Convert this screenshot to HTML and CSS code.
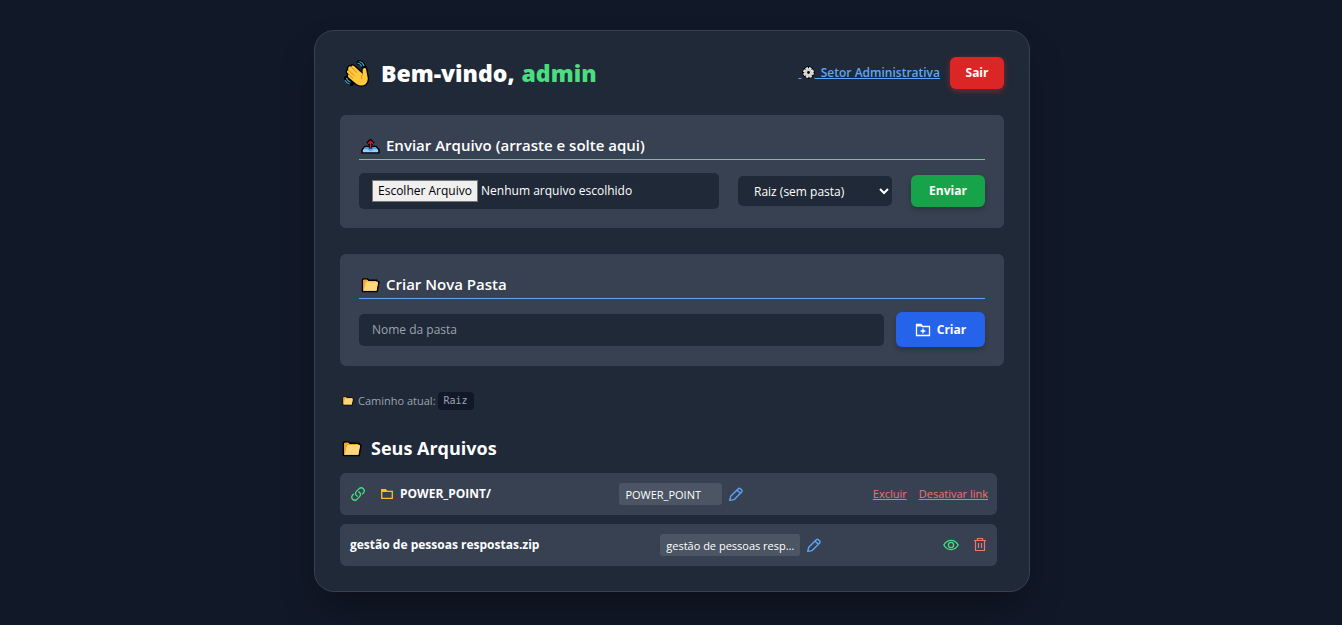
FILE: index.html
```
<!DOCTYPE html>
<html lang="pt-BR">
<head>
	<meta charset="UTF-8">
	<meta name="viewport" content="width=device-width, initial-scale=1.0">
	<title>Seus Arquivos</title>
	<link rel="stylesheet" href="styles.css">
</head>
<body>
	<svg class="sprite" aria-hidden="true">
		<symbol id="folder" viewBox="0 0 20 16">
			<path d="M1.5 14.5V2.2Q1.5 1 2.7 1H6.5L8 2.3H17V4H19L17 14.5Z" fill="#ffd679" stroke="#000" stroke-width="1.6" stroke-linejoin="round"/>
			<path d="M2.2 14V2.5Q2.2 1.8 3 1.8H6.2L7.6 3.1H16.2V4H5.2L3 14Z" fill="#f5a623"/>
			<path d="M5.2 4H18L16.4 13.7H3Z" fill="#ffd679"/>
		</symbol>
		<symbol id="pencil" viewBox="0 0 24 24">
			<path d="M2.5 21.500L4 15.500L15.500 4Q17 2.500 18.500 4L20.500 6Q22 7.500 20.500 9L9 20.500ZM13.500 6L18.500 11" fill="none" stroke="currentColor" stroke-width="2" stroke-linejoin="round"/>
		</symbol>
	</svg>

	<div class="card">
		<div class="header">
			<h1>
				<svg class="wave" viewBox="0 0 28 28" aria-hidden="true">
					<path d="M17 3.500Q20.500 4 22 8M4.500 19.500Q5.500 23 9.500 24.500" fill="none" stroke="#000" stroke-width="5" stroke-linecap="round"/>
					<path d="M6.500 8.500Q7.500 6.500 9.300 8Q9.600 5.500 12 7L16.500 11.200L20.800 15L20.600 10.500Q21.500 8 24 9.500L25 15.500Q27 22 23.500 25.200Q19.500 28 14.500 25L6.700 18.500Q5 16.500 6.800 15.500L5.200 13.600Q4.300 11.600 6.500 11.200Q5.500 10 6.500 8.500Z" fill="#ffc83d" stroke="#000" stroke-width="2.600" stroke-linejoin="round"/>
					<path d="M6.500 8.500Q7.500 6.500 9.300 8Q9.600 5.500 12 7L16.500 11.200L20.800 15L20.600 10.500Q21.500 8 24 9.500L25 15.500Q27 22 23.500 25.200Q19.500 28 14.500 25L6.700 18.500Q5 16.500 6.800 15.500L5.200 13.600Q4.300 11.600 6.500 11.200Q5.500 10 6.500 8.500Z" fill="#ffc83d"/>
					<path d="M9.300 8L15 13.700M6.500 11.200L12.500 16.800M6.800 15.500L10.800 19M20.800 15Q18.500 17 19.800 19.800" fill="none" stroke="#d68a1c" stroke-width="1"/>
					<path d="M15.500 4Q18.500 4.500 19.700 7.500M17.500 2.500Q21 3.500 22 7M4.300 19Q5.500 22 8.500 23.200M3 21.200Q4.500 24.200 7.800 25.200" fill="none" stroke="#2ba7c9" stroke-width="1.200"/>
				</svg>
				<span>Bem-vindo,</span> <span class="user">admin</span>
			</h1>
			<div class="nav">
				<a href="#" class="admin-link">&nbsp;<svg class="gear" viewBox="0 0 16 16" aria-hidden="true"><circle cx="8" cy="8" r="7.600"/><circle cx="8" cy="8" r="5.200" fill="#e6e6e6"/><circle cx="8" cy="8" r="5.400" fill="none" stroke="#e6e6e6" stroke-width="2.600" stroke-dasharray="2.940 1.300"/><circle cx="8" cy="8" r="3.600" fill="none" stroke="#b5b5b5" stroke-width="1"/><circle cx="8" cy="8" r="1.700"/></svg>&nbsp; Setor Administrativa</a>
				<button type="button" class="btn btn-red">Sair</button>
			</div>
		</div>

		<form class="panel">
			<h3 class="line-green">
				<svg class="icon-title" viewBox="0 0 20 16" aria-hidden="true">
					<path d="M4 8H16L19 11.500V14.800H1V11.500Z" fill="#9bd0f5" stroke="#000" stroke-width="1.500" stroke-linejoin="round"/>
					<path d="M4.500 8.500H15.500L17.500 11H13Q12.500 12.700 10 12.700T7 11H2.500Z" fill="#4aa3e8"/>
					<path d="M10 10V3M6.800 5L10 2L13.200 5" fill="none" stroke="#000" stroke-width="3.600"/>
					<path d="M10 10V3M7.300 5L10 2.300L12.700 5" fill="none" stroke="#d3132b" stroke-width="1.500"/>
				</svg>
				Enviar Arquivo (arraste e solte aqui)
			</h3>
			<div class="send-row">
				<div class="file-box">
					<input type="file" id="arquivo" class="file-input">
					<label for="arquivo"><span class="file-btn">Escolher Arquivo</span> Nenhum arquivo escolhido</label>
				</div>
				<select aria-label="Pasta">
					<option>Raiz (sem pasta)</option>
				</select>
				<button type="button" class="btn btn-green">Enviar</button>
			</div>
		</form>

		<form class="panel">
			<h3 class="line-blue">
				<svg class="icon-title" aria-hidden="true"><use href="#folder"/></svg>
				Criar Nova Pasta
			</h3>
			<div class="create-row">
				<input type="text" class="folder-name" placeholder="Nome da pasta" aria-label="Nome da pasta">
				<button type="button" class="btn btn-blue">
					<svg class="icon-new" viewBox="0 0 16 14" aria-hidden="true">
						<path d="M1.500 12.500V1.500H6L7.500 3.500H14.500V12.500Z" fill="none" stroke="currentColor" stroke-width="1.300"/>
						<path d="M1.500 1.500H6L7.500 3.500H1.500Z" fill="currentColor"/>
						<path d="M8 5.600V10.400M5.600 8H10.400" stroke="currentColor" stroke-width="1.300"/>
					</svg>
					Criar
				</button>
			</div>
		</form>

		<div class="path">
			<svg class="icon-path" aria-hidden="true"><use href="#folder"/></svg>
			Caminho atual: <code>Raiz</code>
		</div>

		<h2>
			<svg class="icon-list" aria-hidden="true"><use href="#folder"/></svg>
			Seus Arquivos
		</h2>
		<ul class="files">
			<li>
				<div class="name">
					<svg class="icon-link" viewBox="0 0 24 24" aria-hidden="true">
						<path d="M13.200 8.700a4.500 4.500 0 0 1 1.200 7.200l-4.500 4.500a4.500 4.500 0 0 1-6.300-6.300l1.700-1.800M18.700 11.700l1.700-1.800a4.500 4.500 0 0 0-6.300-6.300L9.600 8.100a4.500 4.500 0 0 0 1.200 7.200" fill="none" stroke="currentColor" stroke-width="2" stroke-linecap="round"/>
					</svg>
					<svg class="icon-folder" viewBox="0 0 12 11" aria-hidden="true">
						<path d="M.7 9.300V.7H4.500L6 2.300H11.300V9.300Z" fill="none" stroke="currentColor" stroke-width="1.300"/>
						<path d="M.7.700H4.500L6 3H.7Z" fill="currentColor"/>
					</svg>
					<span>POWER_POINT/</span>
				</div>
				<div class="rename">
					<input type="text" class="short" value="POWER_POINT" aria-label="Novo nome da pasta">
					<button type="button" class="icon-btn blue" aria-label="Renomear"><svg viewBox="0 0 24 24"><use href="#pencil"/></svg></button>
				</div>
				<div class="links">
					<a href="#">Excluir</a>
					<a href="#">Desativar link</a>
				</div>
			</li>
			<li>
				<div class="name"><span>gestão de pessoas respostas.zip</span></div>
				<div class="rename">
					<input type="text" class="long" value="gestão de pessoas respostas" aria-label="Novo nome do arquivo">
					<button type="button" class="icon-btn blue" aria-label="Renomear"><svg viewBox="0 0 24 24"><use href="#pencil"/></svg></button>
				</div>
				<div class="actions">
					<button type="button" class="icon-btn green" aria-label="Ver">
						<svg viewBox="0 0 16 16"><path d="M.8 8Q3.500 3.400 8 3.400T15.200 8Q12.500 12.600 8 12.600T.8 8Z" fill="none" stroke="currentColor" stroke-width="1.300"/><circle cx="8" cy="8" r="2.600" fill="none" stroke="currentColor" stroke-width="1.300"/></svg>
					</button>
					<button type="button" class="icon-btn red" aria-label="Excluir">
						<svg viewBox="0 0 16 16"><path d="M2 3.500H14M5.500 3.500V1.500H10.500V3.500M3.500 3.500V13.500H12.500V3.500M6.500 6V11M9.500 6V11" fill="none" stroke="currentColor" stroke-width="1.200"/></svg>
					</button>
				</div>
			</li>
		</ul>
	</div>
</body>
</html>
```
FILE: styles.css
```
*{
	margin: 0;
	padding: 0;
	box-sizing: border-box;
}
body{
	min-height: 100vh;
	padding: 30px 16px 30px 18px;
	background-color: #111827;
	color: #fff;
	font-family: "Open Sans", "Noto Sans", sans-serif;
	font-size: 12px;
	line-height: 18px;
}
button, input, select{
	font: inherit;
	color: inherit;
	border: none;
}
button{
	cursor: pointer;
}
svg{
	flex: none;
}
.sprite{
	display: none;
}
.card{
	max-width: 716px;
	margin: 0 auto;
	padding: 25px;
	background-color: #1f2937;
	border: 1px solid #374151;
	border-radius: 20px;
	box-shadow: 0 20px 40px -10px rgba(0,0,0,0.4);
}

/* header */
.header{
	display: flex;
	justify-content: space-between;
	align-items: center;
	margin-bottom: 25px;
}
h1{
	display: flex;
	align-items: center;
	gap: 7px;
	font-size: 23px;
	font-weight: 800;
	line-height: 34px;
}
.wave{
	width: 28px;
	height: 28px;
	margin: 0 4px 0 2px;
}
.user{
	color: #4ade80;
}
.nav{
	display: flex;
	align-items: center;
	gap: 10px;
}
.admin-link{
	color: #60a5fa;
	font-weight: 600;
}
.gear{
	width: 13px;
	height: 13px;
	vertical-align: -2px;
}
.btn{
	display: flex;
	align-items: center;
	justify-content: center;
	height: 32px;
	border-radius: 6px;
	font-weight: 700;
	box-shadow: 0 3px 5px rgba(0,0,0,0.2);
}
.btn-red{
	width: 54px;
	background-color: #dc2626;
	box-shadow: 0 2px 6px rgba(220,38,38,0.5);
}
.btn-green{
	width: 74px;
	background-color: #16a34a;
}
.btn-blue{
	width: 89px;
	height: 35px;
	gap: 6px;
	background-color: #2563eb;
}

/* panels */
.panel{
	margin-bottom: 26px;
	padding: 19px;
	background-color: #374151;
	border-radius: 6px;
}
h3{
	display: flex;
	align-items: center;
	gap: 6px;
	padding-bottom: 3px;
	margin-bottom: 13px;
	font-size: 15px;
	font-weight: 600;
	line-height: 22px;
	border-bottom: 1px solid;
}
.line-green{
	border-color: #4ade80;
}
.line-blue{
	border-color: #60a5fa;
}
.icon-title{
	width: 19px;
	height: 15px;
	margin: 2px 0 0 2px;
}
.send-row{
	display: flex;
	align-items: center;
	gap: 19px;
}
.file-box{
	position: relative;
	flex: 1;
	height: 36px;
	padding: 7px 13px;
	background-color: #1f2937;
	border-radius: 5px;
}
.file-input{
	position: absolute;
	width: 1px;
	height: 1px;
	opacity: 0;
}
.file-btn{
	display: inline-block;
	padding: 1px 5px;
	line-height: 18px;
	color: #000;
	background-color: #efefef;
	border: 1px solid #767676;
}
select{
	width: 154px;
	height: 30px;
	padding: 0 12px;
	background-color: #1f2937;
	border-radius: 5px;
}
.create-row{
	display: flex;
	align-items: center;
	gap: 12px;
}
.folder-name{
	flex: 1;
	height: 32px;
	padding: 0 13px;
	background-color: #1f2937;
	border-radius: 5px;
}
.folder-name::placeholder{
	color: #9ca3af;
}
.icon-new{
	width: 16px;
	height: 14px;
}

/* path */
.path{
	display: flex;
	align-items: center;
	gap: 2px;
	margin-bottom: 25px;
	color: #9ca3af;
	font-size: 11px;
}
.path code{
	padding: 0 6px;
	font-family: "DejaVu Sans Mono", monospace;
	font-size: 10px;
	color: #9ca3af;
	background-color: #111827;
	border-radius: 4px;
}
.icon-path{
	width: 12px;
	height: 10px;
	margin: 0 2px;
}
h2{
	display: flex;
	align-items: center;
	gap: 9px;
	margin-bottom: 12px;
	font-size: 18px;
	font-weight: 700;
	line-height: 26px;
}
.icon-list{
	width: 20px;
	height: 16px;
	margin: 1px 0 0 2px;
}

/* file list */
.files{
	display: flex;
	flex-direction: column;
	gap: 9px;
	padding-right: 7px;
	list-style: none;
}
.files li{
	display: flex;
	justify-content: space-between;
	align-items: center;
	height: 42px;
	padding: 0 9px 0 10px;
	background-color: #374151;
	border-radius: 6px;
}
.name, .rename, .links, .actions{
	display: flex;
	align-items: center;
}
.name{
	font-weight: 700;
}
.icon-link{
	width: 16px;
	height: 16px;
	margin-right: 15px;
	color: #4ade80;
}
.icon-folder{
	width: 12px;
	height: 11px;
	margin-right: 7px;
	color: #fbbf24;
}
.rename{
	gap: 6px;
}
.rename input{
	height: 22px;
	padding: 0 2px 0 6px;
	font-size: 11px;
	background-color: #4b5563;
	border-radius: 3px;
	text-overflow: ellipsis;
}
.rename .short{
	width: 103px;
}
.rename .long{
	width: 140px;
}
.icon-btn{
	display: flex;
	background: none;
}
.icon-btn svg{
	width: 16px;
	height: 16px;
}
.blue{
	color: #60a5fa;
}
.green{
	color: #4ade80;
}
.red, .links a{
	color: #f87171;
}
.links{
	gap: 12px;
	font-size: 11px;
}
.actions{
	gap: 13px;
}
```
